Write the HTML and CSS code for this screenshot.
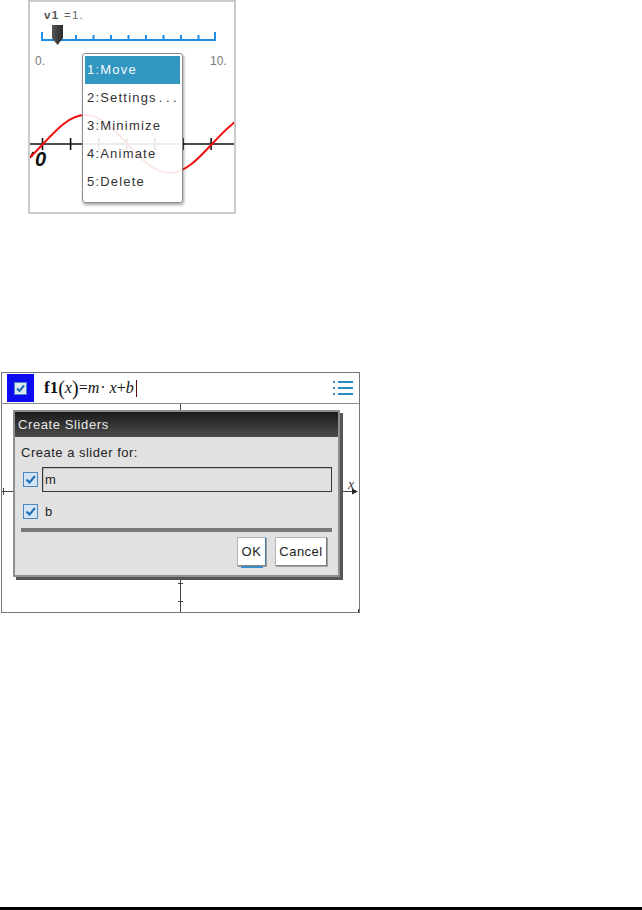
FILE: index.html
```html
<!DOCTYPE html>
<html lang="en">
<head>
    <meta charset="UTF-8">
    <meta name="viewport" content="width=device-width, initial-scale=1.0">
    <title>Sliders</title>
    <link rel="stylesheet" href="styles.css">
</head>
<body>

<!-- Slider with its context menu -->
<div class="slider-figure">
    <svg class="canvas" width="204" height="210" viewBox="30 2 204 210">
        <text x="44" y="19" class="slider-label"><tspan class="slider-name">v1</tspan> =1.</text>

        <g class="track">
            <line x1="41" y1="40" x2="216" y2="40"/>
            <line x1="42" y1="32" x2="42" y2="41"/>
            <line x1="215" y1="32" x2="215" y2="41"/>
            <line x1="58.5" y1="35" x2="58.5" y2="40"/>
            <line x1="76" y1="35" x2="76" y2="40"/>
            <line x1="93.5" y1="35" x2="93.5" y2="40"/>
            <line x1="111" y1="35" x2="111" y2="40"/>
            <line x1="128.5" y1="35" x2="128.5" y2="40"/>
            <line x1="146" y1="35" x2="146" y2="40"/>
            <line x1="163.5" y1="35" x2="163.5" y2="40"/>
            <line x1="181" y1="35" x2="181" y2="40"/>
            <line x1="198.5" y1="35" x2="198.5" y2="40"/>
        </g>
        <defs>
            <linearGradient id="thumbGrad" x1="0" y1="0" x2="1" y2="0">
                <stop offset="0" stop-color="#555"/>
                <stop offset="1" stop-color="#2a2a2a"/>
            </linearGradient>
        </defs>
        <path class="thumb" d="M52 25 H63 V38 L57.5 45 L52 38 Z" fill="url(#thumbGrad)"/>

        <text x="35" y="65" class="range-label">0.</text>
        <text x="210" y="65" class="range-label">10.</text>

        <g class="axis">
            <line x1="28" y1="144" x2="236" y2="144"/>
            <line x1="42.5" y1="138" x2="42.5" y2="150"/>
            <line x1="70.6" y1="138" x2="70.6" y2="150"/>
            <line x1="98.7" y1="138" x2="98.7" y2="150"/>
            <line x1="126.8" y1="138" x2="126.8" y2="150"/>
            <line x1="154.9" y1="138" x2="154.9" y2="150"/>
            <line x1="183" y1="138" x2="183" y2="150"/>
            <line x1="211.1" y1="138" x2="211.1" y2="150"/>
        </g>
        <line class="label-stub" x1="31" y1="157" x2="33.5" y2="152"/>
        <text x="35" y="166" class="axis-label">0</text>

        <path class="curve" d="M0.75 173 C16.04 173 29.22 158.86 43 144 C56.78 129.14 69.96 115 85.25 115 C100.54 115 113.72 129.14 127.5 144 C141.28 158.86 154.46 173 169.75 173 C185.04 173 198.22 158.86 212 144 C225.78 129.14 238.96 115 254.25 115"/>
    </svg>

    <ul class="context-menu">
        <li class="active">1:Move</li>
        <li>2:Settings<span class="dots">...</span></li>
        <li>3:Minimize</li>
        <li>4:Animate</li>
        <li>5:Delete</li>
    </ul>
</div>

<!-- Graph with the Create Sliders dialog -->
<div class="graph-figure">
    <div class="formula-bar">
        <span class="toggle">
            <span class="check small">
                <svg width="11" height="11" viewBox="0 0 11 11"><path d="M2 5.5 L4.5 8 L9 2.5"/></svg>
            </span>
        </span>
        <span class="formula"><b>f1</b><span class="paren">(</span><i>x</i><span class="paren">)</span>=<i>m</i><span class="dot">·</span><i>x</i>+<i>b</i><span class="caret"></span></span>
        <svg class="list-icon" width="20" height="14" viewBox="0 0 20 14">
            <rect x="0" y="0" width="2" height="2"/>
            <rect x="5" y="0" width="15" height="2"/>
            <rect x="0" y="6" width="2" height="2"/>
            <rect x="5" y="6" width="15" height="2"/>
            <rect x="0" y="12" width="2" height="2"/>
            <rect x="5" y="12" width="15" height="2"/>
        </svg>
    </div>

    <div class="graph-area">
        <svg class="canvas" width="357" height="208" viewBox="2 404 357 208">
            <g class="axes">
                <line x1="180.5" y1="404" x2="180.5" y2="612"/>
                <line x1="2" y1="491.5" x2="354" y2="491.5"/>
                <line x1="3.5" y1="488" x2="3.5" y2="495"/>
                <line x1="178" y1="583.5" x2="183" y2="583.5"/>
                <line x1="178" y1="601.5" x2="183" y2="601.5"/>
                <line x1="358.5" y1="609" x2="358.5" y2="612"/>
            </g>
            <path class="arrow" d="M352 488.5 L358 491.5 L352 494.5 Z"/>
            <text x="348" y="489" class="x-label">x</text>
        </svg>

        <div class="dialog">
            <div class="dialog-title">Create Sliders</div>
            <div class="dialog-body">
                <div class="dialog-text">Create a slider for:</div>
                <div class="slider-row">
                    <span class="check">
                        <svg width="13" height="13" viewBox="0 0 13 13"><path d="M2.5 6.5 L5.5 9.5 L11 3"/></svg>
                    </span>
                    <div class="var-input">m</div>
                </div>
                <div class="slider-row second">
                    <span class="check">
                        <svg width="13" height="13" viewBox="0 0 13 13"><path d="M2.5 6.5 L5.5 9.5 L11 3"/></svg>
                    </span>
                    <span class="var-name">b</span>
                </div>
                <div class="separator"></div>
                <div class="buttons">
                    <button class="btn ok">OK</button>
                    <button class="btn cancel">Cancel</button>
                </div>
            </div>
        </div>
    </div>
</div>

<div class="page-rule"></div>

</body>
</html>
```

FILE: styles.css
```css
body {
    margin: 0;
    min-height: 100vh;
    display: flex;
    flex-direction: column;
    background-color: #fff;
    font-family: "Liberation Sans", Arial, sans-serif;
    color: #222;
}
.canvas {
    display: block;
}

/* slider figure */
.slider-figure {
    position: relative;
    flex-shrink: 0;
    box-sizing: border-box;
    width: 208px;
    height: 214px;
    margin-left: 28px;
    border: 2px solid #cacaca;
}
.slider-label {
    font-size: 11.5px;
    letter-spacing: 1.3px;
    fill: #666;
}
.slider-name {
    font-weight: bold;
    fill: #555;
}
.track line {
    stroke: #1e8fe8;
    stroke-width: 2;
}
.range-label {
    font-size: 12px;
    fill: #7a7a7a;
}
.axis line {
    stroke: #111;
    stroke-width: 1.6;
}
.label-stub {
    stroke: #111;
    stroke-width: 2.2;
}
.axis-label {
    font-size: 20px;
    font-style: italic;
    font-weight: bold;
    fill: #111;
}
.curve {
    fill: none;
    stroke: #ee1111;
    stroke-width: 2;
}
.context-menu {
    position: absolute;
    left: 52px;
    top: 51px;
    box-sizing: border-box;
    width: 101px;
    margin: 0;
    padding: 2px 2px 6px;
    list-style: none;
    background-color: rgba(255, 255, 255, 0.9);
    border: 1px solid #8c8c8c;
    border-radius: 3px;
    box-shadow: 1px 2px 3px rgba(0, 0, 0, 0.35);
}
.context-menu li {
    height: 28px;
    line-height: 28px;
    padding-left: 2px;
    font-size: 13px;
    letter-spacing: 1.2px;
    color: #333;
    white-space: nowrap;
}
.context-menu li.active {
    background-color: #3196c0;
    color: #f4fafd;
}
.context-menu .dots {
    margin-left: 2px;
    letter-spacing: 3.5px;
}

/* graph figure */
.graph-figure {
    flex-shrink: 0;
    box-sizing: border-box;
    width: 359px;
    height: 241px;
    margin-top: 158px;
    margin-left: 1px;
    border: 1px solid #777;
}
.formula-bar {
    display: flex;
    align-items: center;
    height: 30px;
    border-bottom: 1px solid #8a8a8a;
}
.toggle {
    display: flex;
    align-items: center;
    justify-content: center;
    width: 27px;
    height: 28px;
    margin-left: 5px;
    background-color: #0c0cf0;
}
.check {
    display: flex;
    align-items: center;
    justify-content: center;
    box-sizing: border-box;
    width: 15px;
    height: 15px;
    background-color: #d3e4f4;
    border: 1px solid #4d87bf;
}
.check.small {
    width: 13px;
    height: 13px;
    background-color: #dce8f4;
}
.check path {
    fill: none;
    stroke: #1d6db3;
    stroke-width: 2;
}
.formula {
    display: flex;
    align-items: center;
    margin-left: 10px;
    font-family: "Liberation Serif", "Times New Roman", serif;
    font-size: 16px;
    color: #111;
}
.formula b {
    font-size: 17px;
}
.formula .paren {
    font-size: 20px;
    line-height: 1;
}
.formula .dot {
    margin: 0 4px 0 1px;
}
.caret {
    width: 1px;
    height: 17px;
    margin-left: 2px;
    background-color: #5a0b0b;
}
.list-icon {
    margin-left: auto;
    margin-right: 6px;
    fill: #2a8cc6;
}
.graph-area {
    position: relative;
    height: 208px;
}
.axes line {
    stroke: #444;
    stroke-width: 1;
}
.arrow {
    fill: #222;
}
.x-label {
    font-family: "Liberation Serif", serif;
    font-style: italic;
    font-size: 14px;
    fill: #333;
}

/* dialog */
.dialog {
    position: absolute;
    left: 11px;
    top: 6px;
    box-sizing: border-box;
    width: 327px;
    border: 2px solid #8e8e8e;
    background-color: #e1e1e1;
    box-shadow: 3px 3px 0 #555;
}
.dialog-title {
    height: 25px;
    line-height: 25px;
    padding-left: 3px;
    font-size: 13px;
    letter-spacing: 0.6px;
    color: #e8e8e8;
    background: linear-gradient(#1b1b1b, #4c4c4c);
}
.dialog-body {
    display: flex;
    flex-direction: column;
    padding: 8px 6px 9px 6px;
}
.dialog-text {
    height: 16px;
    line-height: 16px;
    font-size: 13px;
    letter-spacing: 0.5px;
    margin-bottom: 6px;
}
.slider-row {
    display: flex;
    align-items: center;
    padding-left: 2px;
}
.slider-row.second {
    margin-top: 12px;
}
.var-input {
    flex: 1;
    box-sizing: border-box;
    height: 25px;
    line-height: 23px;
    margin-left: 4px;
    padding-left: 2px;
    font-size: 13px;
    border: 1px solid #383838;
    box-shadow: inset 1px 1px 0 #bdbdbd;
}
.var-name {
    margin-left: 7px;
    font-size: 13px;
    line-height: 15px;
}
.separator {
    height: 4px;
    margin-top: 9px;
    background-color: #787878;
}
.buttons {
    display: flex;
    justify-content: flex-end;
    gap: 9px;
    margin-top: 5px;
    padding-right: 5px;
}
.btn {
    position: relative;
    box-sizing: border-box;
    height: 29px;
    padding: 0;
    font-family: "Liberation Sans", Arial, sans-serif;
    font-size: 13px;
    letter-spacing: 0.5px;
    color: #222;
    background-color: #fff;
    border: 1px solid #b4b4b4;
    border-right-color: #777;
    border-bottom-color: #8a8a8a;
    box-shadow: 1px 1px 0 #a0a0a0;
}
.btn.ok {
    width: 29px;
    border-right-color: #3b7fb4;
}
.btn.cancel {
    width: 52px;
}
.btn.ok::after {
    content: "";
    position: absolute;
    left: 3px;
    right: 2px;
    bottom: -3px;
    height: 2px;
    background-color: #3a8dc4;
}

.page-rule {
    height: 3px;
    margin-top: auto;
    background-color: #000;
}
```
